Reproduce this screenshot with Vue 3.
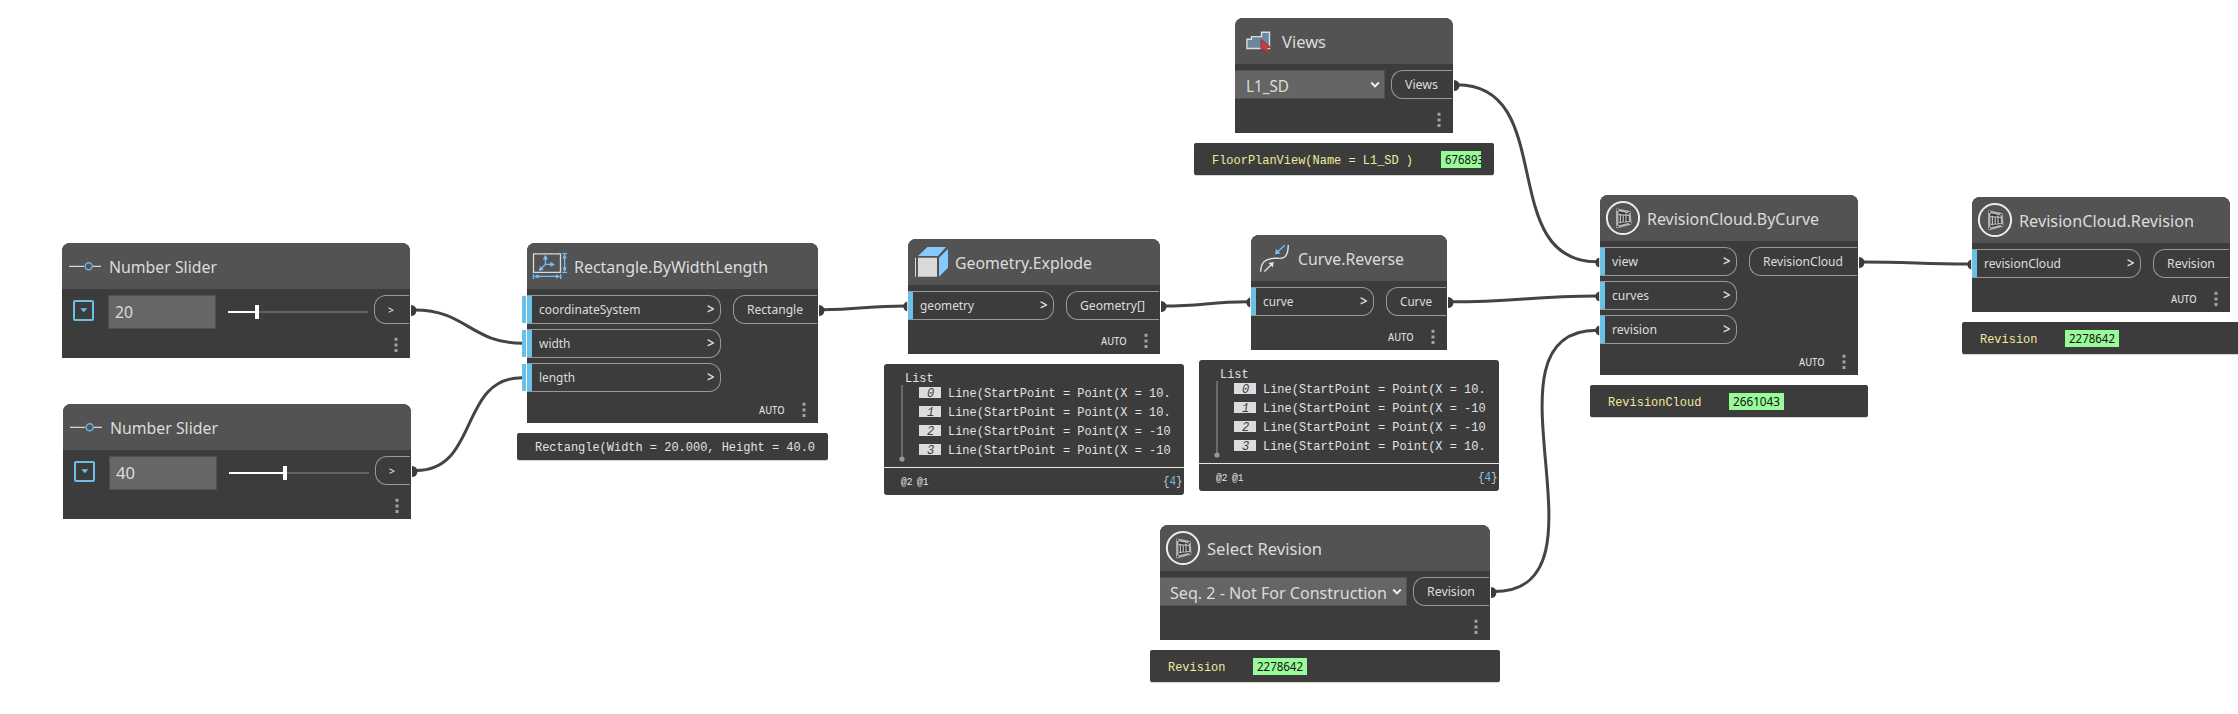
<script setup>
import { h } from 'vue'

// Single line of text set to an exact width on a given baseline.
const Label = (p) =>
  h('svg', { width: p.w, height: p.h, class: 'label' }, [
    h('text', { x: 0, y: p.y, textLength: p.w, lengthAdjust: 'spacingAndGlyphs', fill: 'currentColor' }, p.t),
  ])
Label.props = ['t', 'w', 'h', 'y']

const nodes = [
  { icon: 'slider', title: 'Number Slider', tw: 108, x: 62, y: 243, w: 348, h: 115, slider: { v: '20', vw: 18, at: 27 }, out: { t: '', w: 35 } },
  { icon: 'slider', title: 'Number Slider', tw: 108, x: 63, y: 404, w: 348, h: 115, slider: { v: '40', vw: 19, at: 54 }, out: { t: '', w: 35 } },
  { icon: 'rect', title: 'Rectangle.ByWidthLength', tw: 194, x: 527, y: 243, w: 291, h: 180, auto: true, inW: 194, open: true,
    ins: [{ t: 'coordinateSystem', w: 101.5 }, { t: 'width', w: 31.5 }, { t: 'length', w: 36 }], out: { t: 'Rectangle', w: 84, tw: 56 } },
  { icon: 'cube', title: 'Geometry.Explode', tw: 137, x: 908, y: 239, w: 252, h: 115, auto: true, inW: 146,
    ins: [{ t: 'geometry', w: 54 }], out: { t: 'Geometry[]', w: 93, tw: 65 } },
  { icon: 'curve', title: 'Curve.Reverse', tw: 106, x: 1251, y: 235, w: 196, h: 115, auto: true, inW: 123,
    ins: [{ t: 'curve', w: 30.5 }], out: { t: 'Curve', w: 60, tw: 32 } },
  { icon: 'views', title: 'Views', tw: 44, x: 1235, y: 18, w: 218, h: 115, select: { t: 'L1_SD', w: 150, tw: 43, pad: 11 }, out: { t: 'Views', w: 61, tw: 33 } },
  { icon: 'package', title: 'Select Revision', tw: 115, x: 1160, y: 525, w: 330, h: 115, select: { t: 'Seq. 2 - Not For Construction', w: 247, tw: 217, pad: 10 }, out: { t: 'Revision', w: 76, tw: 48 } },
  { icon: 'package', title: 'RevisionCloud.ByCurve', tw: 172, x: 1600, y: 195, w: 258, h: 180, auto: true, inW: 137,
    ins: [{ t: 'view', w: 26 }, { t: 'curves', w: 37 }, { t: 'revision', w: 45 }], out: { t: 'RevisionCloud', w: 108, tw: 80 } },
  { icon: 'package', title: 'RevisionCloud.Revision', tw: 175, x: 1972, y: 197, w: 258, h: 115, auto: true, inW: 169,
    ins: [{ t: 'revisionCloud', w: 77 }], out: { t: 'Revision', w: 76, tw: 48 } },
]

const previews = [
  { x: 517, y: 433, w: 311, h: 27, t: 'Rectangle(Width = 20.000, Height = 40.0', plain: true },
  { x: 1194, y: 143, w: 300, h: 32, t: 'FloorPlanView(Name = L1_SD )', id: '676893', idW: 40, idT: 39, gap: 28 },
  { x: 1150, y: 650, w: 350, h: 32, t: 'Revision', id: '2278642', idW: 54, idT: 46, gap: 28 },
  { x: 1590, y: 385, w: 278, h: 32, t: 'RevisionCloud', id: '2661043', idW: 55, idT: 47, gap: 28 },
  { x: 1962, y: 322, w: 320, h: 32, t: 'Revision', id: '2278642', idW: 54, idT: 46, gap: 28 },
]

const lists = [
  { x: 884, y: 364, rows: ['10.', '10.', '-10', '-10'] },
  { x: 1199, y: 360, rows: ['10.', '-10', '-10', '10.'] },
]

const curve = (x1, y1, x2, y2) => {
  const c = 0.45 * Math.hypot(x2 - x1, y2 - y1)
  return `M${x1} ${y1}C${x1 + c} ${y1} ${x2 - c} ${y2} ${x2} ${y2}`
}
const wires = [
  curve(415, 310, 522, 343.3),
  curve(416, 470.5, 522, 377.7),
  curve(822, 309.7, 905, 306),
  curve(1164, 306, 1248, 301.8),
  curve(1451, 301.8, 1597, 296),
  curve(1457, 84.7, 1597, 261.8),
  curve(1494, 591.5, 1597, 330.3),
  curve(1862, 262, 1969, 264),
]
const outDots = [[411, 310.5], [412, 471.5], [819, 310.5], [1161, 306.5], [1448, 302.5], [1454, 85.5], [1491, 592.5], [1859, 262.5]]
const inDots = [[907, 306.5], [1250, 302.5], [1599, 262.5], [1599, 296.5], [1599, 330.5], [1971, 264.5]]
const box = (o) => ({ left: o.x + 'px', top: o.y + 'px', width: o.w && o.w + 'px', height: o.h && o.h + 'px' })
</script>

<template>
  <main class="canvas">
    <svg class="wires" width="2238" height="714" fill="none">
      <path v-for="d in wires" :key="d" :d="d" stroke="#444" stroke-width="3" />
      <path v-for="p in outDots" :key="'o' + p" :d="`M${p[0]} ${p[1] - 5.5}a5.5 5.5 0 0 1 0 11z`" fill="#3c3c3c" />
      <path v-for="p in inDots" :key="'i' + p" :d="`M${p[0] + 0.2} ${p[1] - 5}v10a5.2 5.2 0 0 1 0 -10z`" fill="#3c3c3c" />
    </svg>

    <article v-for="(n, i) in nodes" :key="i" class="node" :style="box(n)">
      <header class="head">
        <svg class="icon" width="46" height="46" fill="none">
          <g v-if="n.icon === 'slider'">
            <path d="M7 23.4H22.3M30.8 23.4H39" stroke="#d5d5d5" stroke-width="1.3" />
            <circle cx="26.7" cy="23.2" r="3.5" stroke="#6dafe0" stroke-width="1.5" />
          </g>
          <g v-else-if="n.icon === 'rect'">
            <path d="M6.5 10.8H33.5V29.3H6.5z" stroke="#dcdcdc" stroke-width="1.3" />
            <path d="M18.4 21.4V13M18.4 21.4H26M18.4 21.4L13 26.8M35.2 10.6h4.8M35.2 29.4h4.8M37.6 12v16M6.5 31v5M33.7 31v5M8 33.4h24" stroke="#74c0fc" stroke-width="1.3" />
            <path d="M18.4 11.8l2.6 4.6h-5.2zM28 21.4l-4.6 2.6v-5.2zM11.8 28l1.3-5 3.7 3.7zM37.6 11l2.2 4.4h-4.4zM37.6 29l2.2-4.4h-4.4zM7 33.4l4.4-2.2v4.4zM33.4 33.4l-4.4-2.2v4.4z" fill="#74c0fc" />
          </g>
          <g v-else-if="n.icon === 'cube'">
            <path d="M10 18.7H29V37.7H10zM7 18.7h1v19h-1z" fill="#dadada" />
            <path d="M10 17L19.3 8H38L30 17zM31 18.7L40 10V28.7L31 37.7z" fill="#86c9ff" />
          </g>
          <g v-else-if="n.icon === 'curve'">
            <path d="M37.3 10C36.8 27 29 22.7 23 23.3C14.5 23.8 10 27 9.6 36.7" stroke="#e2e2e2" stroke-width="1.4" />
            <path d="M33.8 10.2L27 16.4" stroke="#74c0fc" stroke-width="1.4" />
            <path d="M24 19.2l.9-5.5 4.6 4.7z" fill="#74c0fc" />
            <path d="M13.4 36.5L20.5 29.4" stroke="#e2e2e2" stroke-width="1.4" />
            <path d="M22.8 27l-1 5.4-4.4-4.4z" fill="#e2e2e2" />
          </g>
          <g v-else-if="n.icon === 'views'">
            <path d="M11.9 30.5V21.2h4.6v-2.6h10v-4.3h8v16.2z" fill="#6d879f" stroke="#d6dde2" stroke-width="1.4" />
            <path d="M26 21.5V33l3-2 2 4 2.4-1.2-1.9-3.6 3.9-1.2z" fill="#cf3b3b" stroke="#6d3535" stroke-width=".8" />
          </g>
          <g v-else>
            <circle cx="23" cy="23" r="16.1" stroke="#ececec" stroke-width="2" />
            <path d="M17.3 14.7L29.5 17.2 30.3 28.7 17.3 32z" fill="#333" stroke="#b4b4b4" stroke-width="2.4" stroke-linejoin="round" />
            <path d="M20.4 18.8v9.8M26 18.4v9M18.5 19.6l10.4.9M18.8 27.4l10-.9M23.2 20.4v6.4" stroke="#c4c4c4" stroke-width="1.2" />
            <g fill="#2c2c2c"><circle cx="17.6" cy="15" r=".9" /><circle cx="29.2" cy="17.6" r=".9" /><circle cx="30" cy="28.2" r=".9" /><circle cx="17.6" cy="31.4" r=".9" /></g>
          </g>
        </svg>
        <Label class="title" :t="n.title" :w="n.tw" :h="46" :y="30" />
      </header>

      <section class="body">
        <div v-if="n.slider" class="slider">
          <span class="toggle"><svg width="8" height="5"><path d="M.3 .3H7.3L3.8 4.2z" fill="#6ac0e7" /></svg></span>
          <span class="value"><Label :t="n.slider.v" :w="n.slider.vw" :h="32" :y="22" /></span>
          <span class="track">
            <span class="filled" :style="{ width: n.slider.at + 'px' }"></span>
            <span class="thumb"></span>
            <span class="rest"></span>
          </span>
        </div>
        <div v-else-if="n.select" class="select" :style="{ width: n.select.w + 'px', paddingLeft: n.select.pad + 'px' }">
          <Label :t="n.select.t" :w="n.select.tw" :h="26" :y="20" />
          <svg width="10" height="8" fill="none"><path d="M1.2 1.5L5 5.3 8.8 1.5" stroke="#f2f2f2" stroke-width="1.9" /></svg>
        </div>
        <div v-else class="ins" :style="{ width: n.inW + 'px' }">
          <div v-for="p in n.ins" :key="p.t" class="in" :class="{ open: n.open }">
            <Label :t="p.t" :w="p.w" :h="27" :y="18" />
            <Label t=">" :w="7.5" :h="27" :y="18" class="chev" />
          </div>
        </div>
        <div class="out" :style="{ width: n.out.w + 'px' }">
          <Label v-if="n.out.t" :t="n.out.t" :w="n.out.tw" :h="27" :y="18" />
          <Label v-else class="small" t=">" :w="6" :h="27" :y="17.5" />
        </div>
      </section>

      <footer class="foot">
        <Label v-if="n.auto" class="auto" t="AUTO" :w="25.5" :h="18" :y="12.5" />
        <svg width="4" height="16" fill="#a2a2a2"><path d="M.5 .7h3v3h-3zM.5 6.5h3v3h-3zM.5 12h3v3h-3z" /></svg>
      </footer>
    </article>

    <aside v-for="(p, i) in previews" :key="'p' + i" class="preview" :class="{ plain: p.plain }" :style="box(p)">
      <Label :t="p.t" :w="p.t.length * 7.18" :h="p.h" :y="p.plain ? 18 : 21" />
      <span v-if="p.id" class="id" :style="{ width: p.idW + 'px', marginLeft: p.gap + 'px' }">
        <Label :t="p.id" :w="p.idT" :h="17" :y="13" />
      </span>
    </aside>

    <aside v-for="l in lists" :key="l.x" class="list" :style="box(l)">
      <div class="tree">
        <Label class="root" t="List" :w="28.7" :h="19" :y="18" />
        <svg class="stem" width="6" height="78"><path d="M3 0V74" stroke="#999" /><circle cx="3" cy="74" r="2.6" fill="#999" /></svg>
        <div v-for="(r, k) in l.rows" :key="k" class="row">
          <span class="index"><Label :t="k" :w="7.2" :h="11" :y="9.5" /></span>
          <Label :t="'Line(StartPoint = Point(X = ' + r" :w="222.6" :h="19" :y="14" />
        </div>
      </div>
      <div class="levels">
        <Label t="@2" :w="11.5" :h="26" :y="17" />
        <Label t="@1" :w="11.5" :h="26" :y="17" />
        <svg class="label count" width="19.5" height="26"><text x="0" y="17" textLength="19.5" lengthAdjust="spacingAndGlyphs" fill="#c9c9c9">{<tspan fill="#6ac0e7">4</tspan>}</text></svg>
      </div>
    </aside>
  </main>
</template>

<style>
body { margin: 0; background: #fff; }
</style>

<style scoped>
.canvas {
  position: relative;
  width: 2238px;
  height: 714px;
  overflow: hidden;
  background: #fff;
  font-family: "Noto Sans", "Open Sans", sans-serif;
  color: #dcdcdc;
}
.canvas * { box-sizing: border-box; }
svg { display: block; flex: none; }
.label { overflow: visible; white-space: pre; }
.wires { position: absolute; left: 0; top: 0; }
.node {
  position: absolute;
  display: flex;
  flex-direction: column;
  background: #3c3c3c;
  border-radius: 8px 8px 0 0;
}
.head {
  display: flex;
  height: 46px;
  flex: none;
  background: #535353;
  border-radius: 8px 8px 0 0;
}
.title { margin-left: 1px; font-size: 17px; }
.body {
  display: flex;
  justify-content: space-between;
  align-items: flex-start;
  flex: 1;
  padding: 6px 1px 0 0;
}
.ins { display: flex; flex-direction: column; gap: 5px; }
.in {
  position: relative;
  display: flex;
  justify-content: space-between;
  height: 29px;
  padding: 0 6px 0 12px;
  border: 1px solid #999;
  border-left: 0;
  border-radius: 0 12px 12px 0;
  font-size: 13px;
}
.in::before {
  content: "";
  position: absolute;
  left: 0;
  top: 0;
  width: 5px;
  height: 27px;
  background: #6ac0e7;
}
.in.open::after {
  content: "";
  position: absolute;
  left: -5px;
  top: 0;
  width: 4px;
  height: 27px;
  background: #6ac0e7;
}
.chev { font-size: 14px; font-weight: 600; }
.out {
  height: 29px;
  padding-left: 13px;
  border: 1px solid #999;
  border-right: 0;
  border-radius: 12px 0 0 12px;
  font-size: 13px;
}
.small { font-size: 11px; font-weight: 600; }
.foot {
  display: flex;
  justify-content: flex-end;
  align-items: center;
  gap: 18px;
  height: 18px;
  margin-bottom: 4px;
  padding-right: 12px;
  flex: none;
}
.auto { font-size: 11px; font-weight: 500; }
.slider { display: flex; align-items: center; height: 34px; padding-left: 11px; font-size: 16px; }
.toggle {
  display: flex;
  align-items: center;
  justify-content: center;
  width: 21px;
  height: 21px;
  margin-top: -4px;
  border: 2px solid #6ac0e7;
  border-radius: 2px;
}
.value {
  width: 108px;
  height: 34px;
  margin: 0 12px 0 14px;
  padding-left: 6px;
  background: #666;
  border: 1px solid #505050;
}
.track { display: flex; align-items: center; width: 140px; }
.filled { height: 2px; background: #fff; }
.thumb { width: 4px; height: 14px; background: #fff; }
.rest { flex: 1; height: 2px; background: #636363; }
.select {
  display: flex;
  justify-content: space-between;
  align-items: center;
  height: 29px;
  padding-right: 4px;
  background: #656565;
  border: 1px solid #505050;
  border-left: 0;
  font-size: 16.5px;
}
.preview {
  position: absolute;
  display: flex;
  align-items: center;
  padding-left: 18px;
  background: #3c3c3c;
  border-radius: 2px;
  box-shadow: 0 1px 0 #d5d5d5;
  color: #f0eb9a;
  font: 12px "Liberation Mono", monospace;
}
.preview.plain { color: #e2e2e2; }
.id {
  height: 17px;
  padding-left: 4px;
  background: #98fb98;
  color: #111;
  font: 13px "Noto Sans", sans-serif;
  overflow: hidden;
}
.list {
  position: absolute;
  width: 300px;
  height: 131px;
  background: #3c3c3c;
  border-radius: 3px;
  color: #e2e2e2;
  font: 12px "Liberation Mono", monospace;
}
.tree { position: relative; height: 104px; border-bottom: 1px solid #e6e6e6; }
.root { margin-left: 20.5px; }
.stem { position: absolute; left: 14.5px; top: 21px; }
.row { display: flex; align-items: center; height: 19px; padding-left: 35px; }
.index {
  width: 22px;
  height: 11px;
  margin-right: 7px;
  padding-left: 8px;
  background: #dcdcdc;
  color: #3c3c3c;
  font-style: italic;
}
.levels { display: flex; gap: 4.5px; padding: 0 2px 0 16.5px; font-size: 10px; }
.count { margin-left: auto; font-size: 12px; }
</style>
